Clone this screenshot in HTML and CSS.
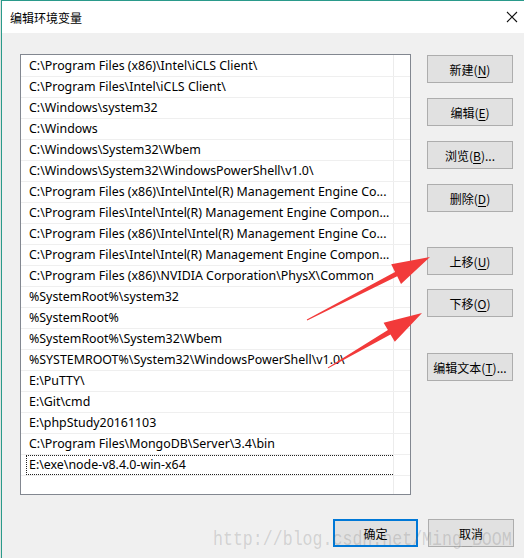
FILE: index.html
```html
<!DOCTYPE html>
<html lang="zh-CN">
<head>
<meta charset="utf-8">
<title>编辑环境变量</title>
<link rel="stylesheet" href="styles.css">
</head>
<body>
<div class="window">
  <div class="titlebar">
    <span class="title">编辑环境变量</span>
    <svg class="close" width="12" height="12" viewBox="0 0 12 12"><path d="M1 1 L11 11 M11 1 L1 11" stroke="#111" stroke-width="1.1" fill="none"/></svg>
  </div>
  <div class="main">
    <div class="top">
      <div class="list">
        <div class="row"><div class="cell">C:\Program Files (x86)\Intel\iCLS Client\</div></div>
        <div class="row"><div class="cell">C:\Program Files\Intel\iCLS Client\</div></div>
        <div class="row"><div class="cell">C:\Windows\system32</div></div>
        <div class="row"><div class="cell">C:\Windows</div></div>
        <div class="row"><div class="cell">C:\Windows\System32\Wbem</div></div>
        <div class="row"><div class="cell">C:\Windows\System32\WindowsPowerShell\v1.0\</div></div>
        <div class="row"><div class="cell">C:\Program Files (x86)\Intel\Intel(R) Management Engine Co...</div></div>
        <div class="row"><div class="cell">C:\Program Files\Intel\Intel(R) Management Engine Compon...</div></div>
        <div class="row"><div class="cell">C:\Program Files (x86)\Intel\Intel(R) Management Engine Co...</div></div>
        <div class="row"><div class="cell">C:\Program Files\Intel\Intel(R) Management Engine Compon...</div></div>
        <div class="row"><div class="cell">C:\Program Files (x86)\NVIDIA Corporation\PhysX\Common</div></div>
        <div class="row"><div class="cell">%SystemRoot%\system32</div></div>
        <div class="row"><div class="cell">%SystemRoot%</div></div>
        <div class="row"><div class="cell">%SystemRoot%\System32\Wbem</div></div>
        <div class="row"><div class="cell">%SYSTEMROOT%\System32\WindowsPowerShell\v1.0\</div></div>
        <div class="row"><div class="cell">E:\PuTTY\</div></div>
        <div class="row"><div class="cell">E:\Git\cmd</div></div>
        <div class="row"><div class="cell">E:\phpStudy20161103</div></div>
        <div class="row"><div class="cell">C:\Program Files\MongoDB\Server\3.4\bin</div></div>
        <div class="row"><div class="cell focus">E:\exe\node-v8.4.0-win-x64</div></div>
      </div>
      <div class="side">
        <div class="btn">新建(<u>N</u>)</div>
        <div class="btn g15">编辑(<u>E</u>)</div>
        <div class="btn g15">浏览(<u>B</u>)...</div>
        <div class="btn g15">删除(<u>D</u>)</div>
        <div class="btn g35">上移(<u>U</u>)</div>
        <div class="btn g14">下移(<u>O</u>)</div>
        <div class="btn g36">编辑文本(<u>T</u>)...</div>
      </div>
    </div>
    <div class="bottom">
      <div class="btn default">确定</div>
      <div class="btn">取消</div>
    </div>
  </div>
  <div class="watermark">http://blog.csdn.net/Ming_BOOM</div>
  <svg class="arrows" width="524" height="558" viewBox="0 0 524 558">
    <polygon fill="#f23a3a" points="306.8,319.6 395.0,271.9 391.2,264.3 430,257 401.0,283.9 397.2,276.3 307.2,320.4"/>
    <polygon fill="#f23a3a" points="327.8,367.5 387.9,330.0 383.6,322.7 422,313 394.8,341.7 390.5,334.4 328.2,368.3"/>
  </svg>
</div>
</body>
</html>
```

FILE: styles.css
```css
html, body {
  margin: 0;
  padding: 0;
}
html {
  background: #dfe3e0;
}
body {
  width: 524px;
  height: 558px;
  overflow: hidden;
  font-family: "Noto Sans", "Noto Sans CJK SC", sans-serif;
  font-size: 12.4px;
  color: #000;
}
.window {
  position: relative;
  margin-left: 1px;
  width: 522px;
  height: 557px;
  border-top: 1px solid #2a9a8b;
  border-left: 1px solid #2a9a8b;
  display: flex;
  flex-direction: column;
}
.titlebar {
  height: 32px;
  flex: none;
  background: #fff;
  display: flex;
  align-items: center;
  justify-content: space-between;
  padding: 0 6px 0 8px;
}
.title {
  font-family: "Noto Sans CJK SC", sans-serif;
  font-size: 12px;
  color: #000;
  margin-top: 1px;
}
.main {
  flex: 1;
  background: #f0f0f0;
  padding: 21px 10px 0 18px;
  display: flex;
  flex-direction: column;
}
.top {
  display: flex;
  align-items: flex-start;
}
.list {
  width: 389px;
  height: 438px;
  border: 1px solid #828790;
  padding-top: 1px;
  background:
    linear-gradient(to right, transparent 372px, #ececec 372px, #ececec 373px, transparent 373px),
    #fff;
}
.row {
  height: 20px;
  border-bottom: 1px solid #efefef;
  display: flex;
}
.cell {
  box-sizing: border-box;
  margin-left: 5px;
  width: 367px;
  height: 20px;
  padding-left: 2px;
  border: 1px solid transparent;
  line-height: 18px;
  white-space: nowrap;
  overflow: hidden;
}
.cell.focus {
  border: 1px dotted #222;
  border-right: none;
}
.side {
  margin-left: 16px;
  margin-top: 1px;
  display: flex;
  flex-direction: column;
}
.btn {
  box-sizing: border-box;
  width: 86px;
  height: 28px;
  border: 1px solid #adadad;
  background: #e1e1e1;
  display: flex;
  align-items: center;
  justify-content: center;
  font-family: "Noto Sans CJK SC", sans-serif;
  font-size: 12px;
  color: #000;
}
.btn u {
  text-underline-offset: 2px;
}
.g14 { margin-top: 14px; }
.g15 { margin-top: 15px; }
.g35 { margin-top: 35px; }
.g36 { margin-top: 36px; }
.bottom {
  margin-top: 24px;
  display: flex;
  justify-content: flex-end;
  gap: 10px;
}
.btn.default {
  width: 85px;
  border: 2px solid #0078d7;
}
.watermark {
  position: absolute;
  left: 211px;
  top: 526px;
  font-family: "Liberation Mono", monospace;
  font-size: 16.6px;
  color: rgba(110, 110, 110, 0.24);
  transform: scaleY(1.25);
  transform-origin: left top;
  white-space: nowrap;
  pointer-events: none;
}
.arrows {
  position: absolute;
  left: -2px;
  top: -1px;
  pointer-events: none;
}
```
